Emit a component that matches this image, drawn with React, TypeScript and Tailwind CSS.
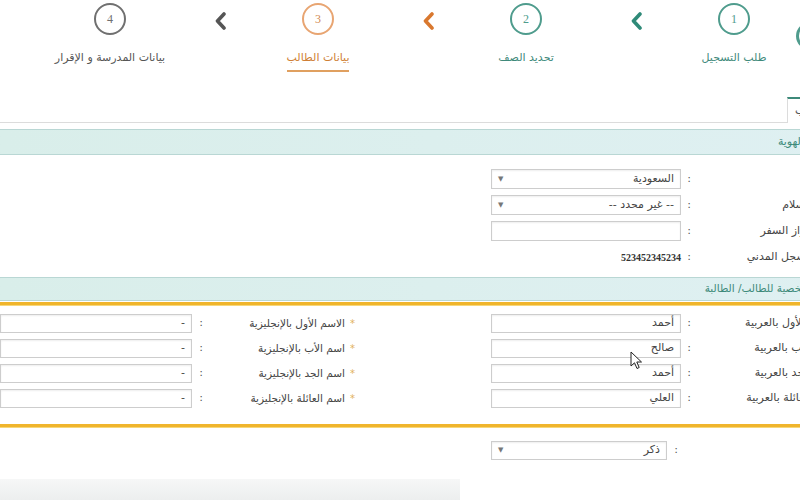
import type { ReactNode } from 'react'

const STEPS = [
  { n: 1, label: 'طلب التسجيل', ring: 'border-[#4f9c8d] text-[#4f9c8d]', text: 'text-[#3f8a7b]', active: false },
  { n: 2, label: 'تحديد الصف', ring: 'border-[#4f9c8d] text-[#4f9c8d]', text: 'text-[#3f8a7b]', active: false },
  { n: 3, label: 'بيانات الطالب', ring: 'border-[#e8a572] text-[#d28a52]', text: 'text-[#cf7f35]', active: true },
  { n: 4, label: 'بيانات المدرسة و الإقرار', ring: 'border-[#707070] text-[#707070]', text: 'text-[#555]', active: false },
]

const CHEVRON = ['#2f8a78', '#d9782f', '#555555']

const AR_NAMES = [
  { label: 'الاسم الأول بالعربية', value: 'أحمد', en: 'الاسم الأول بالإنجليزية' },
  { label: 'اسم الأب بالعربية', value: 'صالح', en: 'اسم الأب بالإنجليزية' },
  { label: 'اسم الجد بالعربية', value: 'أحمد', en: 'اسم الجد بالإنجليزية' },
  { label: 'اسم العائلة بالعربية', value: 'العلي', en: 'اسم العائلة بالإنجليزية' },
]

function Chevron({ color }: { color: string }) {
  return (
    <svg width="13" height="18" viewBox="0 0 13 18">
      <path d="M10 2 L3.5 9 L10 16" fill="none" stroke={color} strokeWidth="3.6" strokeLinecap="round" strokeLinejoin="round" />
    </svg>
  )
}

function Box({ value, select, dash, tall }: { value?: string; select?: boolean; dash?: boolean; tall?: boolean }) {
  return (
    <div
      className={`flex ${tall ? 'h-5' : 'h-[19px]'} items-center justify-between border border-[#cdcdcd] bg-white px-1.5 text-[11px] text-[#444] shadow-[inset_0_1px_2px_rgba(0,0,0,0.07)]`}
    >
      <span>{dash ? '-' : value}</span>
      {select && <span className="text-[7px] text-[#777]">▼</span>}
    </div>
  )
}

function Colon() {
  return <span className="text-center text-[11px] text-[#555]">:</span>
}

function Label({ children }: { children: ReactNode }) {
  return <span className="whitespace-nowrap pr-[26px] text-[11px] text-[#444]">{children}</span>
}

function Header({ children, className }: { children: ReactNode; className: string }) {
  return (
    <div className={`flex items-center whitespace-nowrap border-y border-[#b9d7d4] bg-linear-to-l from-[#dff0f2] to-[#d9eeea] text-[#3d8a7a] ${className}`}>
      {children}
    </div>
  )
}

export default function App() {
  return (
    <div className="relative h-[500px] w-[800px] overflow-hidden bg-white font-['DejaVu_Sans',sans-serif]">
      <div dir="rtl" className="w-[860px]">
        {/* stepper */}
        <div className="flex h-[97px] pr-[51px]">
          {STEPS.map((s, i) => (
            <div key={s.n} className="flex">
              <div className="flex w-[150px] flex-col items-center pt-[3px]">
                <div className={`flex h-8 w-8 items-center justify-center rounded-full border-2 font-['Liberation_Serif',serif] text-[12px] ${s.ring}`}>
                  {s.n}
                </div>
                <div className={`mt-[15px] pb-[3px] text-[11px] ${s.text} ${s.active ? 'border-b-2 border-[#e0a060]' : ''}`}>
                  {s.label}
                </div>
              </div>
              {i < CHEVRON.length && (
                <div className="flex w-[58px] justify-center pl-3 pt-[12px]">
                  <Chevron color={CHEVRON[i]} />
                </div>
              )}
            </div>
          ))}
        </div>

        {/* tabs */}
        <div dir="ltr" className="flex h-[26px]">
          <div className="w-[787px] border-b border-[#dcdcdc]" />
          <div dir="rtl" className="flex flex-1 items-center justify-end border-l border-t-2 border-l-[#dcdcdc] border-t-[#3d8a7a] pl-[7px] text-[11px] text-[#555]">
            بيانات الطالب
          </div>
        </div>

        <div className="mt-[6px]">
          <Header className="h-[26px] pr-[26px] text-[11px]">بيانات الهوية</Header>
        </div>

        {/* identity */}
        <div className="mt-[14px] flex flex-col gap-[6px]">
          <div className="grid h-5 grid-cols-[163px_16px_190px] items-center">
            <Label>الدولة</Label>
            <Colon />
            <Box value="السعودية" select tall />
          </div>
          <div className="grid h-5 grid-cols-[163px_16px_190px] items-center">
            <Label>دين الإسلام</Label>
            <Colon />
            <Box value="-- غير محدد --" select tall />
          </div>
          <div className="grid h-5 grid-cols-[163px_16px_190px] items-center">
            <Label>رقم جواز السفر</Label>
            <Colon />
            <Box tall />
          </div>
          <div className="grid h-5 grid-cols-[163px_16px_190px] items-center">
            <Label>رقم السجل المدني</Label>
            <Colon />
            <span className="font-['Liberation_Serif',serif] text-[10px] font-bold text-[#333]">523452345234</span>
          </div>
        </div>

        <div className="mt-[10px]">
          <Header className="h-[24px] pr-[8px] text-[10.5px]">البيانات الشخصية للطالب/ الطالبة</Header>
        </div>
        <div className="mt-[1px] h-[4px] border-b border-[#f6d77a] bg-[#f0b52c]" />

        {/* names */}
        <div className="mt-[8px] flex flex-col gap-[6px]">
          {AR_NAMES.map((r) => (
            <div
              key={r.label}
              className="grid h-[19px] grid-cols-[163px_16px_190px_131px_15px_135px_18px_192px] items-center"
            >
              <Label>{r.label}</Label>
              <Colon />
              <Box value={r.value} />
              <span />
              <span className="text-center text-[10px] text-[#e2b25c]">*</span>
              <span className="whitespace-nowrap text-[10.5px] text-[#444]">{r.en}</span>
              <Colon />
              <Box dash />
            </div>
          ))}
        </div>

        <div className="mt-[16px] h-[4px] border-b border-[#f6d77a] bg-[#f0b52c]" />

        <div className="mt-[13px] grid h-[19px] grid-cols-[175px_18px_176px] items-center">
          <Label>الجنس</Label>
          <Colon />
          <Box value="ذكر" select />
        </div>

        <div className="mr-auto mt-[19px] h-[22px] w-[460px] bg-linear-to-b from-[#f6f7f7] to-[#eceeee]" />
      </div>

      {/* partial round button at the edge */}
      <div className="absolute left-[796px] top-[22px] h-[28px] w-[28px] rounded-full border-[3px] border-[#4f9c8d]" />

      {/* mouse pointer */}
      <svg className="absolute left-[630px] top-[351px]" width="13" height="19" viewBox="0 0 13 19">
        <path d="M1 1 L1 15 L4.5 11.8 L7 17.5 L9.2 16.5 L6.8 11 L11.5 11 Z" fill="#fff" stroke="#222" strokeWidth="1" strokeLinejoin="round" />
      </svg>
    </div>
  )
}
